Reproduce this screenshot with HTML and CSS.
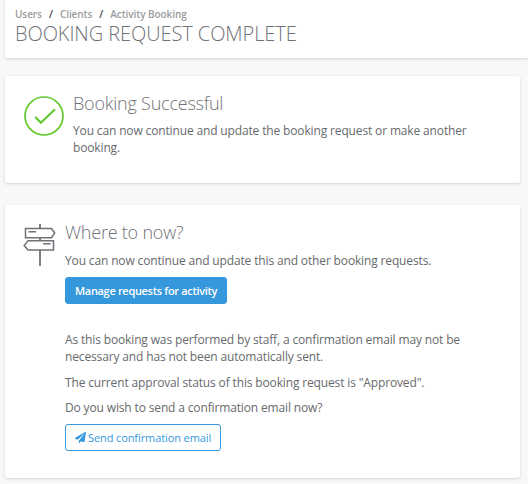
FILE: index.html
```html
<!DOCTYPE html>
<html lang="en">

<head>
    <meta charset="utf-8">
    <meta name="viewport" content="width=device-width, initial-scale=1.0">
    <title>Booking Request Complete</title>
    <link rel="stylesheet" href="styles.css">
</head>

<body>
    <header class="page-header">
        <nav class="breadcrumb">
            <a href="#">Users</a>
            <span class="divider">/</span>
            <a href="#">Clients</a>
            <span class="divider">/</span>
            <a href="#">Activity Booking</a>
        </nav>
        <h1>BOOKING REQUEST COMPLETE</h1>
    </header>

    <main>
        <section class="panel panel-success">
            <svg class="icon-check" viewBox="0 0 40 40" fill="none" stroke="#64c832">
                <circle cx="20" cy="20" r="19" stroke-width="1.7" />
                <path d="M11.3 21l5.6 5.7L31 13.3" stroke-width="2.2" />
            </svg>
            <div class="content">
                <h2>Booking Successful</h2>
                <p>You can now continue and update the booking request or make another booking.</p>
            </div>
        </section>

        <section class="panel panel-next">
            <svg class="icon-signs" viewBox="0 0 33 42" fill="none" stroke="#6f7277" stroke-width="1.5">
                <path d="M17 0v4M17 14v2M17 26v16" stroke-width="1.8" />
                <path d="M2.5 4.5h26l3.2 4.5-3.2 4.7h-26z" />
                <path d="M30.5 16.7H5L1.2 21.4 5 26h25.5z" />
                <path d="M5.5 7.7h7.5M20 19.7h7.5" />
            </svg>
            <div class="content">
                <h2>Where to now?</h2>
                <p>You can now continue and update this and other booking requests.</p>
                <a href="#" class="btn btn-primary">Manage requests for activity</a>
                <div class="email">
                    <p>As this booking was performed by staff, a confirmation email may not be necessary and has not been automatically sent.</p>
                    <p>The current approval status of this booking request is "Approved".</p>
                    <p>Do you wish to send a confirmation email now?</p>
                    <a href="#" class="btn btn-outline">
                        <svg class="icon-plane" viewBox="0 0 512 512" fill="currentColor">
                            <path d="M476 3L12 271c-18 10-15 35 2 43l107 44L408 105c6-5 13 3 9 8L176 407v80c0 24 29 33 43 16l63-78 125 53c14 6 31-3 33-19l72-432c3-20-18-35-36-24z" />
                        </svg>
                        Send confirmation email
                    </a>
                </div>
            </div>
        </section>
    </main>
</body>

</html>
```

FILE: styles.css
```css
* {
    box-sizing: border-box;
}

body {
    margin: 0;
    height: 484px;
    overflow: hidden;
    background-color: #f7f8fa;
    color: #676a6c;
    font-family: "Open Sans", sans-serif;
    font-size: 12px;
    line-height: 17px;
    letter-spacing: -0.145px;
}

a {
    text-decoration: none;
}

h1,
h2 {
    margin: 0;
    color: #6f7277;
    font-weight: 300;
}

p {
    margin: 0 0 8px;
}

.page-header {
    height: 58px;
    margin-left: 5px;
    padding: 7px 10px 0;
    background-color: white;
    border-radius: 0 0 0 3px;
    box-shadow: 0 1px 3px rgba(0, 0, 0, 0.15);
}

.page-header h1 {
    font-size: 20px;
    line-height: 26px;
    letter-spacing: -0.08px;
}

.breadcrumb {
    display: flex;
    font-size: 10px;
    font-weight: 600;
    line-height: 14px;
    letter-spacing: -0.07px;
}

.breadcrumb a {
    color: #999c9e;
}

.divider {
    width: 18px;
    text-align: center;
    color: #444;
}

main {
    margin: 18px 8px 0 5px;
}

.panel {
    display: flex;
    margin-bottom: 22px;
    background-color: white;
    border-radius: 3px;
    box-shadow: 0 1px 3px rgba(0, 0, 0, 0.15);
}

.panel h2 {
    font-size: 18px;
    line-height: 22px;
    letter-spacing: -0.22px;
}

.panel-success {
    height: 107px;
    padding: 16px 20px 0 19px;
}

.panel-next {
    height: 273px;
    padding: 16px 20px 0 18px;
}

.panel-success p {
    margin-top: 8px;
}

.panel-next h2 {
    margin-bottom: 9px;
}

.icon-check {
    flex: none;
    width: 40px;
    height: 40px;
    margin: 4px 9px 0 0;
}

.icon-signs {
    flex: none;
    width: 33px;
    height: 42px;
    margin: 3px 9px 0 0;
}

.btn {
    display: inline-flex;
    align-items: center;
    height: 27px;
    padding: 0 9px;
    border: 1px solid #3598dc;
    border-radius: 3px;
    font-size: 11px;
}

.btn-primary {
    background-color: #3598dc;
    color: white;
    font-weight: 600;
    letter-spacing: -0.32px;
}

.btn-outline {
    color: #3598dc;
    letter-spacing: -0.1px;
}

.icon-plane {
    width: 11px;
    height: 11px;
    margin-right: 2px;
}

.email {
    margin-top: 27px;
}

.email p:first-child {
    margin-bottom: 9px;
}
```
